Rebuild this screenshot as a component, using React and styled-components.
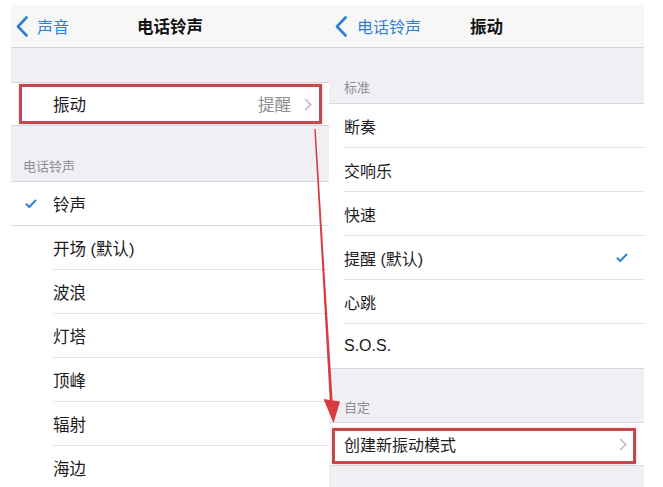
import styled, { createGlobalStyle } from "styled-components";

const GlobalStyle = createGlobalStyle`
  html, body {
    margin: 0;
    padding: 0;
    background: #ffffff;
  }
  body {
    font-family: "Liberation Sans", "Noto Sans CJK SC", sans-serif;
    -webkit-font-smoothing: antialiased;
  }
`;

const Stage = styled.div`
  position: relative;
  width: 663px;
  height: 487px;
  overflow: hidden;
  box-sizing: border-box;
  padding: 5px 0 0 11px;
  display: flex;
  align-items: flex-start;
  background: #ffffff;
`;

const Screen = styled.div`
  width: ${(p) => p.$w}px;
  height: 482px;
  display: flex;
  flex-direction: column;
  background: #efeff4;
  overflow: hidden;
`;

const NavBar = styled.div`
  height: 42px;
  flex-shrink: 0;
  display: grid;
  grid-template-columns: 1fr auto 1fr;
  align-items: center;
  background: #f7f7f8;
  border-bottom: 1px solid #d4d4d8;
`;

const Back = styled.div`
  display: flex;
  align-items: center;
  gap: ${(p) => p.$gap}px;
  padding-left: ${(p) => p.$pl}px;
  color: #2f7fd1;
  font-size: 16px;
  white-space: nowrap;
`;

const Title = styled.div`
  font-size: 16.5px;
  font-weight: 600;
  color: #111;
`;

const Band = styled.div`
  height: ${(p) => p.$h}px;
  flex-shrink: 0;
`;

const SectionHeader = styled.div`
  height: ${(p) => p.$h}px;
  flex-shrink: 0;
  box-sizing: border-box;
  display: flex;
  align-items: flex-end;
  padding: 0 0 ${(p) => p.$pb}px ${(p) => p.$pl}px;
  font-size: 13px;
  line-height: 13px;
  color: #8d8d92;
`;

const Group = styled.div`
  flex-shrink: 0;
  background: #ffffff;
  border-top: 1px solid #d9d9dd;
  border-bottom: 1px solid #d9d9dd;
`;

const Row = styled.div`
  position: relative;
  height: ${(p) => p.$h || 44}px;
  display: grid;
  grid-template-columns: ${(p) => p.$lead}px 1fr;
  border-bottom: ${(p) => (p.$full ? "1px solid #dcdce0" : "none")};
`;

const Lead = styled.div`
  display: flex;
  align-items: center;
  padding-left: 14px;
`;

const Body = styled.div`
  display: flex;
  align-items: center;
  justify-content: space-between;
  padding-right: ${(p) => p.$pr}px;
  border-bottom: ${(p) => (p.$sep ? "1px solid #e3e3e6" : "none")};
  font-size: ${(p) => p.$fs}px;
  color: #1c1c1e;
`;

const Detail = styled.div`
  display: flex;
  align-items: center;
  gap: 13px;
  color: #8e8e93;
`;

const RedBox = styled.div`
  position: absolute;
  top: ${(p) => p.$t}px;
  right: ${(p) => p.$r}px;
  bottom: ${(p) => p.$b}px;
  left: ${(p) => p.$l}px;
  border: 3px solid #c7474f;
  box-shadow: 0 0 2px rgba(220, 90, 95, 0.45);
  pointer-events: none;
`;

const ArrowLayer = styled.svg`
  position: absolute;
  left: 0;
  top: 0;
  pointer-events: none;
`;

const BackChevron = () => (
  <svg width="12" height="21" viewBox="0 0 12 21">
    <path d="M10.5 1.5L2 10.5l8.5 9" fill="none" stroke="#2f7fd1" strokeWidth="2.6" strokeLinecap="round" strokeLinejoin="round" />
  </svg>
);

const Chevron = () => (
  <svg width="8" height="13" viewBox="0 0 8 13">
    <path d="M1.2 1l5.6 5.5-5.6 5.5" fill="none" stroke="#c7c7cc" strokeWidth="1.8" />
  </svg>
);

const Check = () => (
  <svg width="12" height="9" viewBox="0 0 12 9">
    <path d="M1 4.8l3.3 3.2L11 1" fill="none" stroke="#2f7fd1" strokeWidth="2" />
  </svg>
);

const ringtones = ["开场 (默认)", "波浪", "灯塔", "顶峰", "辐射", "海边"];
const patterns = ["断奏", "交响乐", "快速", "提醒 (默认)", "心跳", "S.O.S."];

export default function App() {
  return (
    <>
      <GlobalStyle />
      <Stage>
        <Screen $w={318}>
          <NavBar>
            <Back $pl={5} $gap={9}>
              <BackChevron />
              声音
            </Back>
            <Title>电话铃声</Title>
            <div />
          </NavBar>
          <Band $h={34} />
          <Group>
            <Row $lead={42} $h={42}>
              <Lead />
              <Body $pr={17} $fs={16.5}>
                振动
                <Detail>
                  提醒
                  <Chevron />
                </Detail>
              </Body>
              <RedBox $t={1} $r={7} $b={1} $l={8} />
            </Row>
          </Group>
          <SectionHeader $h={55} $pb={8} $pl={12}>
            电话铃声
          </SectionHeader>
          <Group>
            <Row $lead={42} $h={43} $full>
              <Lead>
                <Check />
              </Lead>
              <Body $pr={16} $fs={16.5}>
                铃声
              </Body>
            </Row>
            {ringtones.map((name, i) => (
              <Row key={name} $lead={42}>
                <Lead />
                <Body $pr={16} $fs={16.5} $sep={i < ringtones.length - 1}>
                  {name}
                </Body>
              </Row>
            ))}
          </Group>
        </Screen>
        <Screen $w={315}>
          <NavBar>
            <Back $pl={6} $gap={10}>
              <BackChevron />
              电话铃声
            </Back>
            <Title>振动</Title>
            <div />
          </NavBar>
          <SectionHeader $h={55} $pb={9} $pl={15}>
            标准
          </SectionHeader>
          <Group>
            {patterns.map((name, i) => (
              <Row key={name} $lead={15}>
                <div />
                <Body $pr={16} $fs={16} $sep={i < patterns.length - 1}>
                  {name}
                  {name === "提醒 (默认)" && <Check />}
                </Body>
              </Row>
            ))}
          </Group>
          <SectionHeader $h={53} $pb={8} $pl={15}>
            自定
          </SectionHeader>
          <Group>
            <Row $lead={15} $h={42}>
              <div />
              <Body $pr={17} $fs={16}>
                创建新振动模式
                <Chevron />
              </Body>
              <RedBox $t={5} $r={8} $b={1} $l={3} />
            </Row>
          </Group>
        </Screen>
        <ArrowLayer width="663" height="487" viewBox="0 0 663 487">
          <polygon points="314.3,129 315.7,129 332.6,401 329.8,401" fill="#d93a40" />
          <polygon points="323.5,399 340,401.5 333.5,423" fill="#d93a40" />
        </ArrowLayer>
      </Stage>
    </>
  );
}
